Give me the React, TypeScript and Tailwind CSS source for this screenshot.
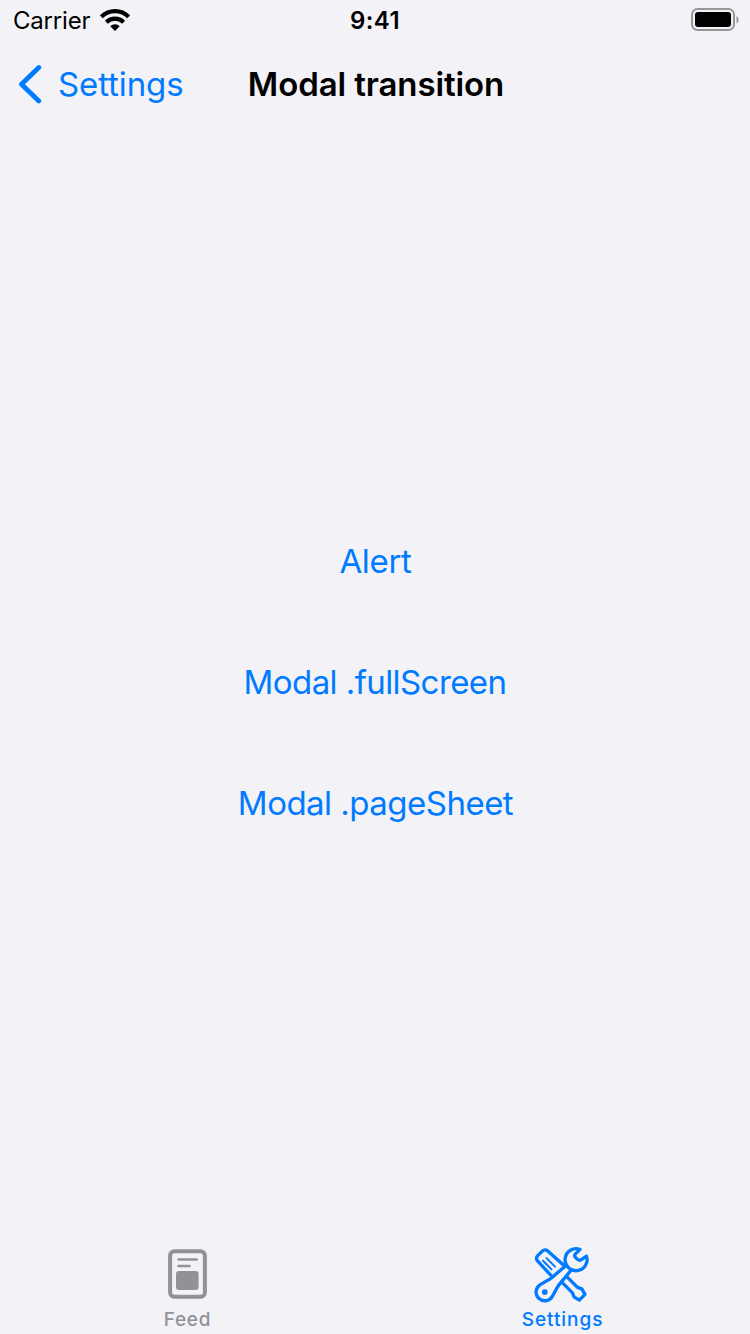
const actions = [
  { label: 'Alert', spacing: 'pl-px tracking-[-0.3px]' },
  { label: 'Modal .fullScreen', spacing: 'tracking-[-0.58px]' },
  { label: 'Modal .pageSheet', spacing: 'pl-px tracking-[-0.52px]' },
];

function WifiIcon() {
  return (
    <svg width="30" height="22" viewBox="0 0 30 22" fill="none" stroke="#000" strokeWidth="4.2">
      <path d="M1.400 7.800a19.300 19.300 0 0 1 27.200 0" />
      <path d="M6.400 13.200a12.200 12.200 0 0 1 17.200 0" />
      <path d="M10.300 17.300a6.700 6.700 0 0 1 9.400 0L15 22Z" fill="#000" stroke="none" />
    </svg>
  );
}

function BatteryIcon() {
  return (
    <svg width="48" height="24" viewBox="0 0 48 24">
      <rect x="1" y="1" width="42" height="21" rx="5.5" fill="none" stroke="#97979a" strokeWidth="2" />
      <rect x="4" y="4" width="36" height="15" rx="3" fill="#000" />
      <path d="M45.500 8v7.400c1.400-.7 2.100-2 2.100-3.700S46.900 8.700 45.500 8Z" fill="#97979a" />
    </svg>
  );
}

function FeedIcon() {
  return (
    <svg width="40" height="50" viewBox="0 0 40 50" fill="none" stroke="#929296">
      <rect x="2.100" y="2.200" width="34.800" height="45.600" rx="4.500" strokeWidth="4" />
      <path d="M10.500 10.500h18.200M10.500 17h11" strokeWidth="2.500" strokeLinecap="round" />
      <rect x="8" y="22" width="22.600" height="19" rx="3" fill="#929296" stroke="none" />
    </svg>
  );
}

function ToolsIcon() {
  return (
    <svg width="64" height="60" viewBox="0 -0.400 64 60" fill="none" stroke="#007aff" strokeWidth="3.300" strokeLinejoin="round" strokeLinecap="round">
      <path d="M20.500 30.500 7.500 16.500Q5.500 14 7.500 11.500L12.300 6.700Q15 4.300 17.700 6.500L34 21" />
      <path d="m13 16.300 8.500 8.700M16.500 13.700l8.500 8.500" strokeWidth="2" />
      <path d="M50 5.050A11 11 0 1 0 56.500 11.800L51 15.400Q49.300 16.500 47.800 15.200L45.300 12.800Q44 11.300 45.300 9.800Z" />
      <path d="M35.500 21.500 22 33Q20 34.700 17.500 36L10.300 40.200A8.700 8.700 0 1 0 22.700 51.300L27 43.500Q28.500 40.800 31 38L40.500 26.500" />
      <circle cx="14.800" cy="47.700" r="2.900" fill="#007aff" stroke="none" />
      <path d="M31.500 37.500 42.500 48.500 44 52.500 49.300 55.700 55 50 51.800 44.500 47.500 43 36.500 32" />
    </svg>
  );
}

export default function App() {
  return (
    <div className="flex h-[1334px] w-[750px] flex-col overflow-hidden bg-[#f2f2f7] font-['Inter',sans-serif] text-[#007aff]">
      <header className="grid h-10 grid-cols-3 items-center text-black">
        <div className="flex items-center pl-[13px] text-[24px] leading-[38px]">
          <span className="w-[86.500px] pt-0.5 tracking-[-0.2px]">Carrier</span>
          <WifiIcon />
        </div>
        <span className="pt-0.5 text-center text-[24px] leading-[38px] font-semibold tracking-[0.400px]">9:41</span>
        <div className="flex justify-end pr-[11px]">
          <BatteryIcon />
        </div>
      </header>

      <nav className="grid h-[88px] grid-cols-[240px_272px_238px] items-center">
        <button className="flex items-center pl-[18px]">
          <svg width="24" height="40" viewBox="0 0 24 40" fill="none" stroke="#007aff" strokeWidth="4.800" strokeLinecap="round" strokeLinejoin="round">
            <path d="M20.800 3.500 3.500 20.200 20.800 36.900" />
          </svg>
          <span className="pt-0.5 pl-4 text-[33px] tracking-[-0.100px]">Settings</span>
        </button>
        <h1 className="pt-0.5 text-center text-[33px] font-semibold tracking-[-0.100px] whitespace-nowrap text-black">Modal transition</h1>
      </nav>

      <main className="flex flex-1 flex-col items-center gap-[53px] pt-[400px]">
        {actions.map(({ label, spacing }) => (
          <button key={label} className={`h-[68px] text-[33px] ${spacing}`}>
            {label}
          </button>
        ))}
      </main>

      <footer className="grid h-[98px] grid-cols-2 text-[19px] leading-6 font-medium">
        <button className="flex flex-col items-center pt-[13px] text-[#929296]">
          <FeedIcon />
          <span className="mt-[9px] tracking-[0.700px]">Feed</span>
        </button>
        <button className="flex flex-col items-center pt-2">
          <div className="pr-0.5">
            <ToolsIcon />
          </div>
          <span className="mt-1 tracking-[0.950px]">Settings</span>
        </button>
      </footer>
    </div>
  );
}
